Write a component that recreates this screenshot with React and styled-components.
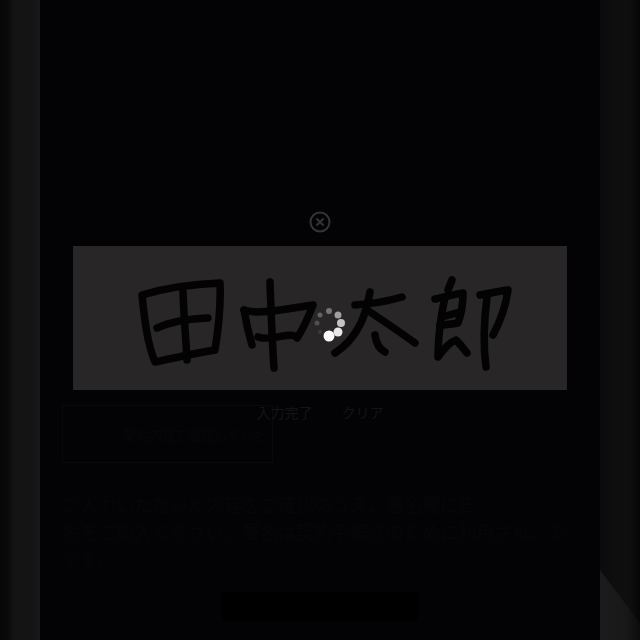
import React from "react";
import styled, { createGlobalStyle } from "styled-components";

const Global = createGlobalStyle`
  html, body { margin: 0; padding: 0; background: #030305; }
  body { font-family: "Noto Sans CJK JP", "Liberation Sans", sans-serif; }
`;

const Frame = styled.div`
  width: 640px;
  height: 640px;
  display: flex;
  overflow: hidden;
  background: #030305;
`;

const Bezel = styled.div`
  position: relative;
  width: 40px;
  flex: none;
  background: ${(p) =>
    p.$side === "left"
      ? "linear-gradient(90deg, #070707 0, #0a0a0a 8px, #131313 14px, #141414 30px, #181818 40px)"
      : "linear-gradient(90deg, #0b0b0b 0, #0f0f0f 20px, #0e0e0e 30px, #060606 40px)"};
`;

const Glare = styled.div`
  position: absolute;
  left: 0;
  right: 0;
  bottom: 0;
  height: 70px;
  background: linear-gradient(90deg, #1b1b1b 0, #181818 26px, #0c0c0c 40px);
  clip-path: polygon(0 0, 100% 76%, 100% 100%, 0 100%);
`;

const Screen = styled.main`
  position: relative;
  width: 560px;
  flex: none;
  display: flex;
  flex-direction: column;
  padding: 405px 22px 0;
  box-sizing: border-box;
`;

const ConsentBox = styled.div`
  width: 211px;
  height: 58px;
  box-sizing: border-box;
  border: 1px solid #09090b;
  display: flex;
  align-items: center;
  padding-left: 60px;
  font-size: 13px;
  color: #070709;
  white-space: nowrap;
`;

const Paragraph = styled.p`
  margin: 28px 0 0;
  font-size: 18px;
  line-height: 27px;
  color: #060608;
  height: 81px;
  overflow: hidden;
  white-space: nowrap;
`;

const SubmitButton = styled.div`
  align-self: center;
  width: 196px;
  height: 30px;
  margin-top: 20px;
  background: #000;
`;

const Overlay = styled.div`
  position: absolute;
  inset: 0;
  display: flex;
  flex-direction: column;
  align-items: center;
  padding-top: 211px;
`;

const CloseButton = styled.div`
  height: 22px;
  margin-bottom: 13px;
  display: flex;
`;

const SignaturePad = styled.div`
  position: relative;
  width: 494px;
  height: 144px;
  flex: none;
  background: #282627;
`;

const Ink = styled.svg`
  display: block;
  filter: blur(0.6px);
`;

const Spinner = styled.svg`
  position: absolute;
  left: 238px;
  top: 59px;
  filter: blur(0.5px);
`;

const PadActions = styled.div`
  display: flex;
  gap: 29px;
  margin-top: 12px;
  font-size: 14px;
  line-height: 20px;
  color: #141414;
`;

const strokes = [
  "M142 295C145 325 148 345 155 362C175 358 195 353 215 350C219 325 221 305 220 283C195 284 165 288 142 295Z",
  "M183 292C184 320 186 340 187 360",
  "M157 328C170 322 185 319 208 318",
  "M270 282C271 310 272 340 274 368",
  "M244 310C246 322 249 335 252 345",
  "M244 310C258 315 285 309 313 305C308 318 304 328 297 338C293 330 270 342 258 337",
  "M355 305C372 304 388 301 402 297",
  "M370 292C366 315 358 338 335 353",
  "M367 310C385 322 400 332 415 343",
  "M375 335C376 343 379 349 385 352",
  "M452 280L448 290",
  "M435 299C445 297 455 294 463 293C463 305 461 315 458 323C452 324 446 325 440 325",
  "M445 297C441 315 438 335 438 357C443 350 450 342 456 340C460 344 464 349 467 353",
  "M442 317L460 312",
  "M480 295C490 293 500 291 508 290C506 305 501 320 493 335",
  "M487 297C484 320 483 345 486 367",
];

const dots = [
  [12, 21, 5.5, "#ffffff"],
  [21, 17, 4.5, "#e8e8e8"],
  [24, 8, 4, "#c4c4c4"],
  [21, 0, 3.5, "#a0a0a0"],
  [12, -4, 3, "#747474"],
  [3, 0, 2.5, "#626262"],
  [0, 8, 2.5, "#505050"],
  [3, 17, 2, "#3c3c3c"],
];

export default function App() {
  return (
    <Frame>
      <Global />
      <Bezel $side="left" />
      <Screen>
        <ConsentBox>契約内容を確認しました</ConsentBox>
        <Paragraph>
          ご入力いただいた内容をご確認のうえ、署名欄に氏
          <br />
          名をご記入ください。署名は契約手続きのために利用され、お
          <br />
          です。
        </Paragraph>
        <SubmitButton />
        <Overlay>
          <CloseButton>
            <svg width="22" height="22" viewBox="0 0 22 22" fill="none" stroke="#343434">
              <circle cx="11" cy="11" r="9.5" strokeWidth="2" />
              <path d="M7.5 7.5l7 7M14.5 7.5l-7 7" strokeWidth="2" />
            </svg>
          </CloseButton>
          <SignaturePad>
            <Ink width="494" height="144" viewBox="73 246 494 144" fill="none" stroke="#030303" strokeWidth="7.5" strokeLinecap="round" strokeLinejoin="round">
              {strokes.map((d) => (
                <path key={d} d={d} />
              ))}
            </Ink>
            <Spinner width="36" height="40" viewBox="-6 -10 36 40">
              {dots.map(([x, y, r, c]) => (
                <circle key={`${x}-${y}`} cx={x} cy={y} r={r} fill={c} />
              ))}
            </Spinner>
          </SignaturePad>
          <PadActions>
            <span>入力完了</span>
            <span>クリア</span>
          </PadActions>
        </Overlay>
      </Screen>
      <Bezel $side="right">
        <Glare />
      </Bezel>
    </Frame>
  );
}
